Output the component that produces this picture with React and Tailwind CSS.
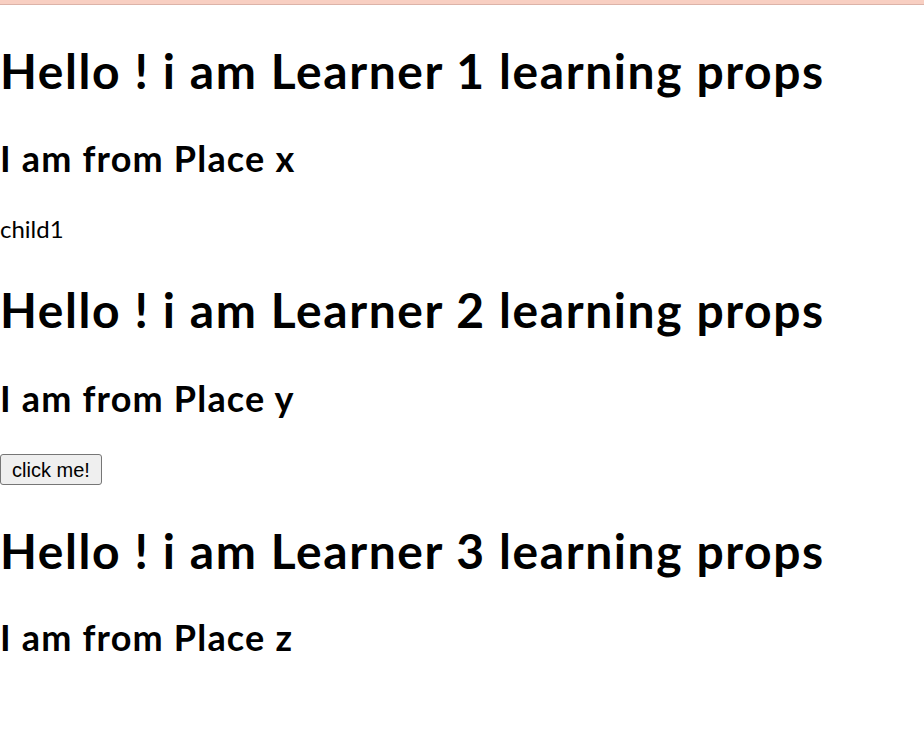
export default function App() {
  const h1 = "m-0 text-[48px] leading-[64px] font-bold tracking-[0.033em] text-black whitespace-nowrap";
  const h2 = "m-0 text-[36px] leading-[48px] font-bold tracking-[0.033em] text-black whitespace-nowrap";
  return (
    <div className="min-h-[729px] bg-white" style={{ fontFamily: "Lato, 'Noto Sans', sans-serif" }}>
      <div className="h-[5px] bg-[#f8cfc2] border-b border-[#dcb3a8]" />
      <h1 className={`${h1} mt-[34px]`}>Hello ! i am Learner 1 learning props</h1>
      <h2 className={`${h2} mt-[31px]`}>I am from Place x</h2>
      <p className="m-0 mt-[31px] text-[24px] leading-[32px] text-black">child1</p>
      <h1 className={`${h1} mt-[33px]`}>Hello ! i am Learner 2 learning props</h1>
      <h2 className={`${h2} mt-[32px]`}>I am from Place y</h2>
      <div className="mt-[32px] flex">
        <button
          className="h-[31px] w-[102px] rounded-[3px] border border-[#767676] bg-[#efefef] text-[20px] leading-none text-black"
          style={{ fontFamily: "'Liberation Sans', Arial, sans-serif" }}
        >
          click me!
        </button>
      </div>
      <h1 className={`${h1} mt-[34px]`}>Hello ! i am Learner 3 learning props</h1>
      <h2 className={`${h2} mt-[30px]`}>I am from Place z</h2>
    </div>
  );
}
